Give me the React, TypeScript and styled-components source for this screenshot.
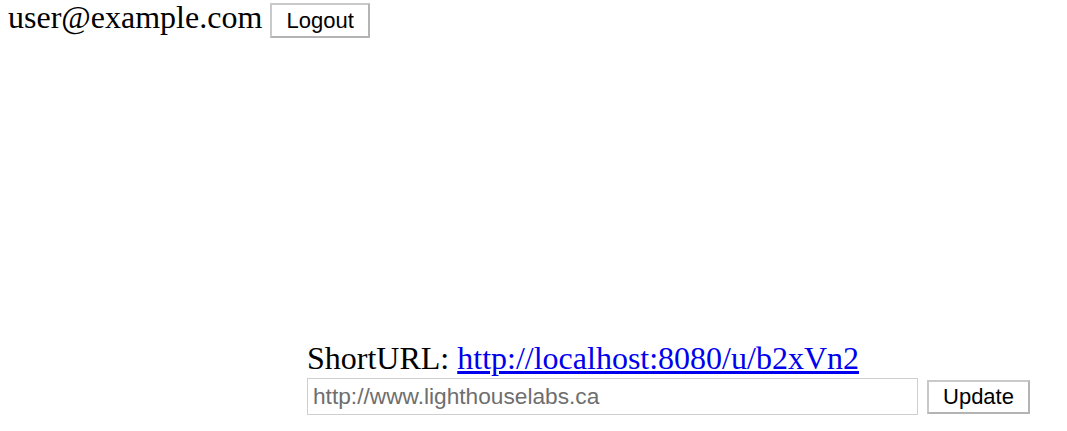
import React from "react";
import styled, { createGlobalStyle } from "styled-components";

const GlobalStyle = createGlobalStyle`
  html, body {
    margin: 0;
    padding: 0;
    background: #ffffff;
  }
  body {
    font-family: "Liberation Serif", "Times New Roman", serif;
    color: #000;
  }
`;

const Page = styled.div`
  padding: 0 8px;
  display: flex;
  flex-direction: column;
`;

const Header = styled.header`
  display: flex;
  align-items: flex-start;
  height: 38px;
`;

const Email = styled.span`
  font-size: 32px;
  line-height: 34px;
`;

const Button = styled.button<{ $width: number; $height: number; $top?: number }>`
  box-sizing: border-box;
  width: ${(p) => p.$width}px;
  height: ${(p) => p.$height}px;
  margin-top: ${(p) => p.$top ?? 0}px;
  font-family: "Liberation Sans", Arial, sans-serif;
  font-size: 22px;
  color: #000;
  background: #ffffff;
  border: 2px solid #c9c9c9;
  border-right-color: #b4b4b4;
  border-bottom-color: #b4b4b4;
  padding: 0;
  flex: none;
`;

const LogoutButton = styled(Button)`
  margin-left: 8px;
`;

const Section = styled.section`
  margin-top: 300px;
  margin-left: 299px;
  display: flex;
  flex-direction: column;
`;

const Title = styled.div`
  font-size: 32px;
  line-height: 40px;
  height: 40px;
`;

const Link = styled.a`
  color: #0000ee;
  text-decoration: underline;
`;

const Form = styled.form`
  display: flex;
  align-items: center;
  gap: 9px;
`;

const UrlInput = styled.input`
  box-sizing: border-box;
  width: 611px;
  height: 37px;
  border: 1px solid #cfcfcf;
  padding: 0 5px;
  font-family: "Liberation Sans", Arial, sans-serif;
  font-size: 22.7px;
  color: #6e6e6e;
  outline: none;
  &::placeholder {
    color: #6e6e6e;
  }
`;

export default function App() {
  return (
    <>
      <GlobalStyle />
      <Page>
        <Header>
          <Email>user@example.com</Email>
          <LogoutButton $width={100} $height={35} $top={3}>
            Logout
          </LogoutButton>
        </Header>
        <Section>
          <Title>
            ShortURL: <Link href="#">http://localhost:8080/u/b2xVn2</Link>
          </Title>
          <Form onSubmit={(e) => e.preventDefault()}>
            <UrlInput type="text" placeholder="http://www.lighthouselabs.ca" />
            <Button $width={103} $height={34}>
              Update
            </Button>
          </Form>
        </Section>
      </Page>
    </>
  );
}
